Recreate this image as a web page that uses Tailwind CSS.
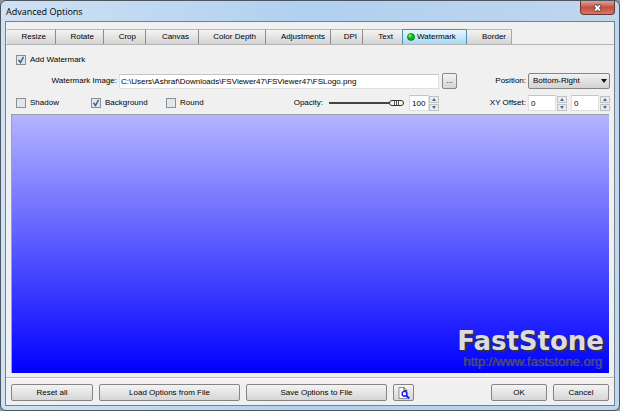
<!DOCTYPE html>
<html lang="en">
<head>
  <meta charset="UTF-8" />
  <title>Advanced Options</title>
  <meta name="viewport" content="width=device-width, initial-scale=1" />
  <script src="https://cdn.jsdelivr.net/npm/@tailwindcss/browser@4"></script>
</head>

<body class="bg-[#8c969f] font-['Liberation_Sans',Arial,sans-serif] text-[8px] leading-[10px] text-black">
  <div class="h-screen flex flex-col rounded-md border border-[#4b5660] bg-linear-to-r from-[#cfe1f2] via-[#b0d0f0] to-[#c0d6ec] px-1 pb-1">

    <!-- Title bar -->
    <header class="h-5 shrink-0 flex items-start justify-between pl-px">
      <h1 class="pt-1 font-['Open_Sans',sans-serif] text-[9px] leading-[13px]">Advanced Options</h1>
      <button type="button" aria-label="Close" class="w-[35px] h-[14px] flex items-center justify-center rounded-b border border-t-0 border-[#6b3535] bg-linear-to-b from-[#dca199] via-[#c4503f] to-[#d77964]">
        <svg class="w-[9px] h-2" viewBox="0 0 9 8" fill="none">
          <path d="M1.5 1l6 6M7.5 1l-6 6" stroke="#5a4044" stroke-width="3.6" />
          <path d="M2 1.5l5 5M7 1.5l-5 5" stroke="#fff" stroke-width="1.8" />
        </svg>
      </button>
    </header>

    <main class="flex-1 min-h-0 flex flex-col border border-[#73818e] bg-[#f0f0f0] pt-[7px]">

      <!-- Tabs -->
      <nav class="shrink-0 flex border-b border-[#b5b5b5] pl-px text-right">
        <button type="button" class="w-[49px] h-[15px] pr-[9px] text-right border-t border-r border-t-[#b9b9b9] border-r-[#8c8c8c] bg-linear-to-b from-[#f3f3f3] to-[#d4d4d4]">Resize</button>
        <button type="button" class="w-12 h-[15px] pr-[9px] text-right border-t border-r border-t-[#b9b9b9] border-r-[#8c8c8c] bg-linear-to-b from-[#f3f3f3] to-[#d4d4d4]">Rotate</button>
        <button type="button" class="w-[42px] h-[15px] pr-[9px] text-right border-t border-r border-t-[#b9b9b9] border-r-[#8c8c8c] bg-linear-to-b from-[#f3f3f3] to-[#d4d4d4]">Crop</button>
        <button type="button" class="w-[53px] h-[15px] pr-[9px] text-right border-t border-r border-t-[#b9b9b9] border-r-[#8c8c8c] bg-linear-to-b from-[#f3f3f3] to-[#d4d4d4]">Canvas</button>
        <button type="button" class="w-[67px] h-[15px] pr-[9px] text-right border-t border-r border-t-[#b9b9b9] border-r-[#8c8c8c] bg-linear-to-b from-[#f3f3f3] to-[#d4d4d4]">Color Depth</button>
        <button type="button" class="w-[65px] h-[15px] pr-[5px] text-right border-t border-r border-t-[#b9b9b9] border-r-[#8c8c8c] bg-linear-to-b from-[#f3f3f3] to-[#d4d4d4]">Adjustments</button>
        <button type="button" class="w-8 h-[15px] pr-[5px] text-right border-t border-r border-t-[#b9b9b9] border-r-[#8c8c8c] bg-linear-to-b from-[#f3f3f3] to-[#d4d4d4]">DPI</button>
        <button type="button" class="w-[39px] h-[15px] pr-[9px] text-right border-t border-t-[#b9b9b9] bg-linear-to-b from-[#f3f3f3] to-[#d4d4d4]">Text</button>
        <button type="button" aria-current="page" class="w-[65px] h-[15px] pl-1 flex items-center gap-[2px] border border-b-0 border-[#4c8fb3] bg-linear-to-b from-[#eaf6fd] to-[#a3d9f5]">
          <svg class="w-2 h-2" viewBox="0 0 8 8">
            <circle cx="4" cy="4" r="3.8" fill="#087a10" />
            <circle cx="3.8" cy="3.8" r="3" fill="#12b81c" />
            <circle cx="3" cy="2.8" r="1.4" fill="#7cf07e" />
          </svg>
          Watermark
        </button>
        <button type="button" class="w-[45px] h-[15px] pr-[5px] text-right border-t border-r border-t-[#b9b9b9] border-r-[#a5a5a5] bg-linear-to-b from-[#f3f3f3] to-[#d4d4d4]">Border</button>
      </nav>

      <!-- Watermark page -->
      <form class="flex-1 min-h-0 flex flex-col pl-[5px] pr-1 pt-[10px] pb-1 border-b border-[#b5b5b5]">
        <label class="w-fit pl-[5px] flex items-center gap-1">
          <span class="grid size-[10px]">
            <input type="checkbox" checked class="peer appearance-none col-start-1 row-start-1 size-[10px] border border-[#8a8f94] bg-[#e4e7ea]" />
            <svg class="col-start-1 row-start-1 size-[10px] pointer-events-none invisible peer-checked:visible" viewBox="0 0 10 10" fill="none"><path d="M2.5 4.8l2 2.7 3-5.6" stroke="#3d6294" stroke-width="1.5" /></svg>
          </span>
          Add Watermark
        </label>

        <div class="mt-2 h-4 shrink-0 flex items-center">
          <label for="image" class="w-[108px] pr-[2px] text-right">Watermark Image:</label>
          <input id="image" type="text" value="C:\Users\Ashraf\Downloads\FSViewer47\FSViewer47\FSLogo.png" class="flex-1 min-w-0 h-[15px] px-px border border-[#e0e0e0] border-t-[#c4c4c4] bg-white" />
          <button type="button" aria-label="Browse" class="ml-[3px] w-[15px] h-4 rounded-xs border border-[#858585] bg-linear-to-b from-[#f4f4f4] to-[#d4d4d4]">...</button>
          <label for="position" class="w-[71px] pr-[2px] text-right">Position:</label>
          <div class="grid w-[82px]">
            <select id="position" class="appearance-none col-start-1 row-start-1 h-4 pl-1 rounded-xs border border-[#858585] bg-linear-to-b from-[#f2f2f2] to-[#d2d2d2]">
              <option>Top-Left</option>
              <option selected>Bottom-Right</option>
              <option>Center</option>
            </select>
            <svg class="col-start-1 row-start-1 self-center justify-self-end mr-[3px] w-[6px] h-1 pointer-events-none" viewBox="0 0 6 4"><path d="M0 0h6L3 4z" fill="#111" /></svg>
          </div>
        </div>

        <div class="mt-[6px] h-4 shrink-0 flex items-center">
          <label class="w-20 pl-[5px] flex items-center gap-1">
            <span class="grid size-[10px]">
              <input type="checkbox" class="peer appearance-none col-start-1 row-start-1 size-[10px] border border-[#8a8f94] bg-[#e4e7ea]" />
              <svg class="col-start-1 row-start-1 size-[10px] pointer-events-none invisible peer-checked:visible" viewBox="0 0 10 10" fill="none"><path d="M2.5 4.8l2 2.7 3-5.6" stroke="#3d6294" stroke-width="1.5" /></svg>
            </span>
            Shadow
          </label>
          <label class="w-[75px] flex items-center gap-1">
            <span class="grid size-[10px]">
              <input type="checkbox" checked class="peer appearance-none col-start-1 row-start-1 size-[10px] border border-[#8a8f94] bg-[#e4e7ea]" />
              <svg class="col-start-1 row-start-1 size-[10px] pointer-events-none invisible peer-checked:visible" viewBox="0 0 10 10" fill="none"><path d="M2.5 4.8l2 2.7 3-5.6" stroke="#3d6294" stroke-width="1.5" /></svg>
            </span>
            Background
          </label>
          <label class="flex items-center gap-1">
            <span class="grid size-[10px]">
              <input type="checkbox" class="peer appearance-none col-start-1 row-start-1 size-[10px] border border-[#8a8f94] bg-[#e4e7ea]" />
              <svg class="col-start-1 row-start-1 size-[10px] pointer-events-none invisible peer-checked:visible" viewBox="0 0 10 10" fill="none"><path d="M2.5 4.8l2 2.7 3-5.6" stroke="#3d6294" stroke-width="1.5" /></svg>
            </span>
            Round
          </label>

          <label for="opacity" class="ml-auto pr-[6px]">Opacity:</label>
          <input id="opacity" type="range" min="0" max="100" value="100" class="appearance-none w-[75px] h-[6px] bg-[linear-gradient(#444,#444)] bg-[length:100%_2px] bg-center bg-no-repeat [&::-webkit-slider-thumb]:appearance-none [&::-webkit-slider-thumb]:w-[15px] [&::-webkit-slider-thumb]:h-[6px] [&::-webkit-slider-thumb]:rounded-full [&::-webkit-slider-thumb]:border [&::-webkit-slider-thumb]:border-[#333] [&::-webkit-slider-thumb]:bg-[repeating-linear-gradient(90deg,#f4f4f4_0_1px,#555_1px_2px)] [&::-webkit-slider-thumb]:bg-[length:7px_100%] [&::-webkit-slider-thumb]:bg-center [&::-webkit-slider-thumb]:bg-no-repeat [&::-webkit-slider-thumb]:bg-[#f4f4f4]" />
          <input type="text" aria-label="Opacity value" value="100" class="ml-[5px] w-5 h-4 pl-[2px] border border-[#e0e0e0] border-t-[#c4c4c4] bg-white" />
          <div class="flex flex-col gap-px w-[10px]">
            <button type="button" aria-label="Increase opacity" class="h-[7px] flex items-center justify-center border border-[#c2c2c2] bg-[#ececec]"><svg class="w-1 h-[3px]" viewBox="0 0 4 3"><path d="M0 3l2-3 2 3z" fill="#456a9c" /></svg></button>
            <button type="button" aria-label="Decrease opacity" class="h-[7px] flex items-center justify-center border border-[#c2c2c2] bg-[#ececec]"><svg class="w-1 h-[3px]" viewBox="0 0 4 3"><path d="M0 0l2 3 2-3z" fill="#456a9c" /></svg></button>
          </div>

          <label for="offsetX" class="w-[89px] pr-[2px] text-right">XY Offset:</label>
          <input id="offsetX" type="text" value="0" class="w-7 h-4 pl-[2px] border border-[#e0e0e0] border-t-[#c4c4c4] bg-white" />
          <div class="ml-px flex flex-col gap-px w-[10px]">
            <button type="button" aria-label="Increase X" class="h-[7px] flex items-center justify-center border border-[#c2c2c2] bg-[#ececec]"><svg class="w-1 h-[3px]" viewBox="0 0 4 3"><path d="M0 3l2-3 2 3z" fill="#456a9c" /></svg></button>
            <button type="button" aria-label="Decrease X" class="h-[7px] flex items-center justify-center border border-[#c2c2c2] bg-[#ececec]"><svg class="w-1 h-[3px]" viewBox="0 0 4 3"><path d="M0 0l2 3 2-3z" fill="#456a9c" /></svg></button>
          </div>
          <input type="text" aria-label="Y offset" value="0" class="ml-1 w-7 h-4 pl-[2px] border border-[#e0e0e0] border-t-[#c4c4c4] bg-white" />
          <div class="ml-px flex flex-col gap-px w-[10px]">
            <button type="button" aria-label="Increase Y" class="h-[7px] flex items-center justify-center border border-[#c2c2c2] bg-[#ececec]"><svg class="w-1 h-[3px]" viewBox="0 0 4 3"><path d="M0 3l2-3 2 3z" fill="#456a9c" /></svg></button>
            <button type="button" aria-label="Decrease Y" class="h-[7px] flex items-center justify-center border border-[#c2c2c2] bg-[#ececec]"><svg class="w-1 h-[3px]" viewBox="0 0 4 3"><path d="M0 0l2 3 2-3z" fill="#456a9c" /></svg></button>
          </div>
        </div>

        <!-- Preview -->
        <div class="mt-[3px] mr-px flex-1 min-h-0 flex flex-col items-end justify-end pr-[5px] pb-1 border-t border-l border-[#a0a0a8] bg-linear-to-b/srgb from-[#b4b4ff] to-[#0000ff]">
          <p class="font-['DejaVu_Sans',sans-serif] font-bold text-[26px] leading-[26px] text-[#dcdce0] [text-shadow:1px_1px_1px_#334,2px_2px_2px_#334]">FastStone</p>
          <p class="pr-[2px] text-[13px] leading-[15px] text-[#505078] [text-shadow:1px_0_1px_#404070]">http://www.faststone.org</p>
        </div>
      </form>

      <!-- Bottom buttons -->
      <footer class="shrink-0 flex items-center gap-[6px] pt-[5px] pb-1 px-[5px] border-t border-white">
        <button type="button" class="w-[82px] h-[17px] rounded-xs border border-[#858585] bg-linear-to-b from-[#f4f4f4] to-[#d6d6d6]">Reset all</button>
        <button type="button" class="w-[141px] h-[17px] rounded-xs border border-[#858585] bg-linear-to-b from-[#f4f4f4] to-[#d6d6d6]">Load Options from File</button>
        <button type="button" class="w-[141px] h-[17px] rounded-xs border border-[#858585] bg-linear-to-b from-[#f4f4f4] to-[#d6d6d6]">Save Options to File</button>
        <button type="button" aria-label="Preview" class="w-[21px] h-[17px] flex items-center justify-center rounded-xs border border-[#858585] bg-linear-to-b from-[#f4f4f4] to-[#d6d6d6]">
          <svg class="w-3 h-3" viewBox="0 0 12 12" fill="none">
            <path d="M1 .5h5l3 3v8H1z" fill="#fff" stroke="#777" stroke-width=".8" />
            <path d="M6 .5v3h3" stroke="#333" stroke-width=".9" />
            <circle cx="6.5" cy="6.8" r="2.4" fill="#e8f0ff" stroke="#1a1aff" stroke-width="1.4" />
            <path d="M8.3 8.6l2.9 2.9" stroke="#1a1aff" stroke-width="2" />
          </svg>
        </button>
        <button type="button" class="ml-auto w-14 h-[17px] rounded-xs border border-[#858585] bg-linear-to-b from-[#f4f4f4] to-[#d6d6d6]">OK</button>
        <button type="button" class="w-14 h-[17px] rounded-xs border border-[#858585] bg-linear-to-b from-[#f4f4f4] to-[#d6d6d6]">Cancel</button>
      </footer>
    </main>
  </div>
</body>
</html>
